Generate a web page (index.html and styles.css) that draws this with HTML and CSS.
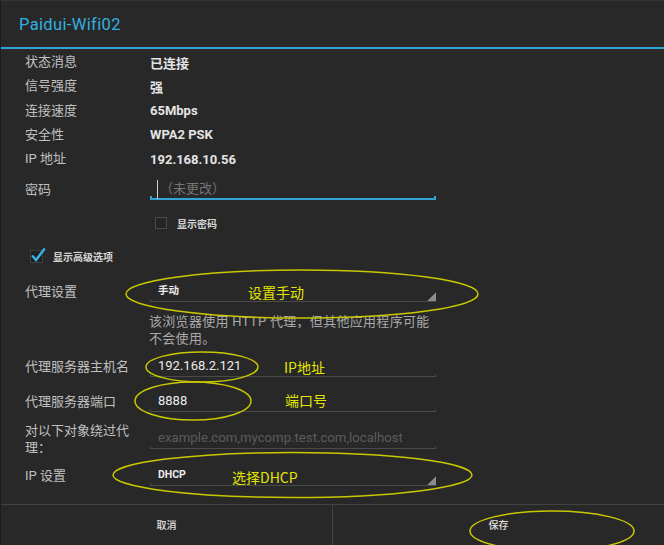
FILE: index.html
```html
<!DOCTYPE html>
<html lang="zh-CN">
<head>
<meta charset="utf-8">
<title>Paidui-Wifi02</title>
<link rel="stylesheet" href="styles.css">
</head>
<body>
<div class="dialog">
  <div class="header"><h1 class="title">Paidui-Wifi02</h1></div>
  <div class="body">
    <div class="info">
      <div class="info-row"><span class="label">状态消息</span><span class="value">已连接</span></div>
      <div class="info-row"><span class="label">信号强度</span><span class="value">强</span></div>
      <div class="info-row"><span class="label">连接速度</span><span class="value">65Mbps</span></div>
      <div class="info-row"><span class="label">安全性</span><span class="value">WPA2 PSK</span></div>
      <div class="info-row"><span class="label">IP 地址</span><span class="value">192.168.10.56</span></div>
    </div>
    <div class="row row-pw">
      <span class="label">密码</span>
      <div class="field focused">
        <div class="ftext"><span class="cursor"></span><span class="placeholder">（未更改）</span></div>
        <div class="fline"></div>
      </div>
    </div>
    <div class="check-row check-pw"><span class="box"></span><span>显示密码</span></div>
    <div class="check-row check-adv">
      <svg class="checked" width="16" height="16" viewBox="0 0 16 16"><rect x="0.5" y="2.5" width="12" height="12" fill="#202020" stroke="#3e3e3e"/><polyline points="3,8.5 6,12 14,1.5" fill="none" stroke="#33b5e5" stroke-width="2.4" stroke-linecap="square"/></svg>
      <span>显示高级选项</span>
    </div>
    <div class="row row-proxy">
      <span class="label">代理设置</span>
      <div class="field spinner">
        <div class="ftext">手动</div>
        <div class="fline"></div>
        <span class="tri"></span>
      </div>
    </div>
    <p class="help">该浏览器使用 HTTP 代理，但其他应用程序可能不会使用。</p>
    <div class="row row-host">
      <span class="label">代理服务器主机名</span>
      <div class="field">
        <div class="ftext">192.168.2.121</div>
        <div class="fline"></div>
      </div>
    </div>
    <div class="row row-port">
      <span class="label">代理服务器端口</span>
      <div class="field">
        <div class="ftext">8888</div>
        <div class="fline"></div>
      </div>
    </div>
    <div class="row row-bypass">
      <span class="label label-2">对以下对象绕过代理：</span>
      <div class="field">
        <div class="ftext"><span class="placeholder2">example.com,mycomp.test.com,localhost</span></div>
        <div class="fline"></div>
      </div>
    </div>
    <div class="row row-ip">
      <span class="label">IP 设置</span>
      <div class="field spinner">
        <div class="ftext">DHCP</div>
        <div class="fline"></div>
        <span class="tri"></span>
      </div>
    </div>
  </div>
  <div class="buttons">
    <button class="btn">取消</button>
    <button class="btn btn-right">保存</button>
  </div>
</div>
<div class="annot">
  <svg width="664" height="545" viewBox="0 0 664 545">
    <g fill="none" stroke="#c8c800" stroke-width="1.5">
      <ellipse cx="302" cy="294" rx="176" ry="24"/>
      <ellipse cx="202" cy="367" rx="56" ry="15"/>
      <ellipse cx="193" cy="401" rx="58" ry="19"/>
      <ellipse cx="292.5" cy="475" rx="179.5" ry="22.5"/>
      <ellipse cx="552" cy="531" rx="82" ry="20"/>
    </g>
  </svg>
  <span class="note n1">设置手动</span>
  <span class="note n2">IP地址</span>
  <span class="note n3">端口号</span>
  <span class="note n4">选择DHCP</span>
</div>
</body>
</html>
```
FILE: styles.css
```css
* { box-sizing: border-box; margin: 0; padding: 0; }
html, body { width: 664px; height: 545px; background: #282828; overflow: hidden; }
body {
  position: relative;
  font-family: Roboto, "Noto Sans CJK SC", sans-serif;
  font-size: 13px;
  color: #bdbdbd;
}
.dialog {
  width: 664px;
  height: 545px;
  border-top: 1px solid #343434;
  border-left: 1px solid #1c1c1c;
  display: flex;
  flex-direction: column;
}
.header {
  height: 48px;
  flex: none;
  display: flex;
  align-items: center;
  padding-left: 18px;
  border-bottom: 2px solid #31a6d6;
}
.title {
  font-weight: 400;
  font-size: 16.5px;
  color: #33b0e0;
  letter-spacing: 0.35px;
}
.body { flex: 1; padding: 1px 0 0 24px; }

.info-row { display: flex; align-items: center; height: 24.25px; }
.label { width: 125px; padding-right: 13px; flex: none; line-height: 18px; color: #c0c0c0; }
.value { font-weight: 700; color: #e4e4e4; }

.row { display: flex; align-items: center; }
.field { width: 286px; flex: none; position: relative; }
.ftext { display: flex; align-items: center; height: 18px; line-height: 18px; padding-left: 8px; color: #ececec; white-space: nowrap; }
.fline { height: 3px; margin-top: -1px; border: 1px solid #4a4a4a; border-top: none; }

.focused .ftext { padding-left: 7px; }
.focused .fline { height: 4px; margin-top: -2px; border-color: #31a6d6; border-width: 0 2px 2px 2px; }
.cursor { width: 1px; height: 19px; background: #d0d0d0; margin-right: 2px; }
.placeholder { color: #757575; }
.placeholder2 { color: #5c5c5c; font-size: 13.2px; }

.row-pw { margin-top: 9px; }

.check-row { display: flex; align-items: center; font-size: 10px; font-weight: 700; color: #d6d6d6; }
.check-pw { margin-top: 17px; margin-left: 130px; height: 12px; }
.box { width: 12px; height: 12px; border: 1px solid #4b4b4b; background: #252525; margin-right: 10px; }
.check-adv { margin-top: 19px; margin-left: 5px; height: 16px; }
.checked { margin-right: 7px; display: block; }

.row-proxy { margin-top: 18px; }
.spinner .ftext { font-size: 10.5px; font-weight: 700; }
.tri {
  position: absolute;
  right: 0;
  bottom: 1px;
  width: 9px;
  height: 9px;
  background: #8c8c8c;
  clip-path: polygon(100% 0, 100% 100%, 0 100%);
}

.help { margin: 10.5px 0 0 124px; width: 286px; line-height: 17px; color: #a9a9a9; letter-spacing: 0.3px; }

.row-host { margin-top: 10.5px; }
.row-port { margin-top: 15px; }
.row-bypass { margin-top: 10px; }
.label-2 { line-height: 17px; }
.row-ip { margin-top: 10px; }

.buttons {
  height: 41px;
  flex: none;
  display: flex;
  border-top: 1px solid #434343;
}
.btn {
  flex: 1;
  background: transparent;
  border: none;
  color: #e0e0e0;
  font-family: Roboto, "Noto Sans CJK SC", sans-serif;
  font-size: 10px;
  font-weight: 500;
  padding-bottom: 2px;
}
.btn-right { border-left: 1px solid #434343; }

.annot { position: absolute; left: 0; top: 0; width: 664px; height: 545px; pointer-events: none; }
.annot svg { display: block; }
.note {
  position: absolute;
  font-family: "Noto Sans CJK SC", sans-serif;
  font-size: 14px;
  line-height: 16px;
  color: #e4e400;
  white-space: nowrap;
}
.n1 { left: 248px; top: 284px; }
.n2 { left: 284px; top: 359px; }
.n3 { left: 285px; top: 392px; }
.n4 { left: 232px; top: 469px; }
```
